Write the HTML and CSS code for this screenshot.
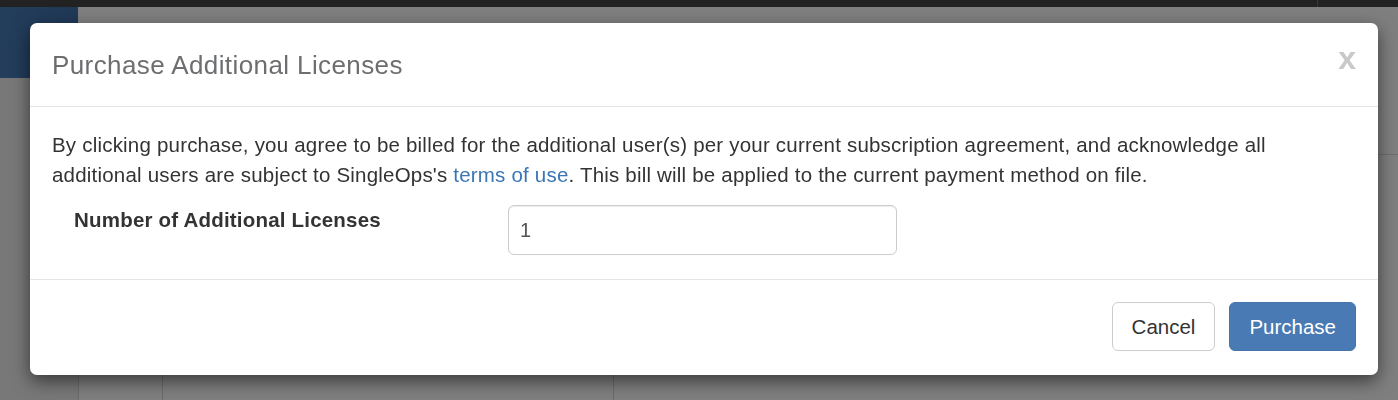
FILE: index.html
```html
<!DOCTYPE html>
<html lang="en">
<head>
  <meta charset="UTF-8">
  <title>Purchase Additional Licenses</title>
  <link rel="stylesheet" href="styles.css">
</head>
<body>

  <!-- page behind the modal -->
  <div class="app">
    <div class="topbar"><span class="topbar-split"></span></div>
    <div class="app-body">
      <div class="sidebar">
        <div class="brand"></div>
      </div>
      <div class="main">
        <div class="main-head"></div>
        <div class="main-grid">
          <div class="col col-narrow"></div>
          <div class="col col-wide"></div>
          <div class="col col-rest"></div>
        </div>
      </div>
    </div>
  </div>

  <div class="backdrop"></div>

  <!-- Modal -->
  <div class="modal">
    <div class="modal-header">
      <button type="button" class="close">x</button>
      <h4 class="modal-title">Purchase Additional Licenses</h4>
    </div>

    <div class="modal-body">
      <p>By clicking purchase, you agree to be billed for the additional user(s) per your current subscription agreement, and acknowledge all additional users are subject to SingleOps's <a href="#">terms of use</a>. This bill will be applied to the current payment method on file.</p>

      <div class="form-row">
        <label for="license-count">Number of Additional Licenses</label>
        <input type="text" id="license-count" class="form-control" value="1">
      </div>
    </div>

    <div class="modal-footer">
      <button type="button" class="btn btn-default">Cancel</button>
      <button type="button" class="btn btn-primary">Purchase</button>
    </div>
  </div>

</body>
</html>
```

FILE: styles.css
```css
* {
  box-sizing: border-box;
}

html,
body {
  height: 100%;
}

body {
  margin: 0;
  font-family: "Liberation Sans", Arial, Helvetica, sans-serif;
  color: #333;
  background-color: #fff;
  overflow: hidden;
}

/* Page behind the modal */
.app {
  height: 100%;
  display: flex;
  flex-direction: column;
}

.topbar {
  height: 7px;
  background-color: #444;
  position: relative;
}

.topbar-split {
  position: absolute;
  left: 1317px;
  top: 0;
  bottom: 0;
  border-left: 1px solid #6e6e6e;
}

.app-body {
  flex: 1;
  display: flex;
}

.sidebar {
  width: 78px;
  background-color: #f0f0f0;
}

.brand {
  height: 71px;
  background: linear-gradient(90deg, #477cb8, #3f72ad);
}

.main {
  flex: 1;
  display: flex;
  flex-direction: column;
  background-color: #fff;
}

.main-head {
  height: 148px;
  border-bottom: 1px solid #dcdcdc;
}

.main-grid {
  flex: 1;
  display: flex;
}

.col {
  border-left: 1px solid #d8d8d8;
}

.col-narrow {
  width: 84px;
}

.col-wide {
  width: 451px;
}

.col-rest {
  flex: 1;
}

.backdrop {
  position: fixed;
  inset: 0;
  background-color: rgba(0, 0, 0, 0.5);
}

/* Modal */
.modal {
  position: absolute;
  left: 30px;
  top: 23px;
  width: 1348px;
  height: 352px;
  background-color: #fff;
  border-radius: 7px;
  box-shadow: 0 6px 18px rgba(0, 0, 0, 0.55);
  display: flex;
  flex-direction: column;
}

.modal-header {
  padding: 27px 22px 26px;
  border-bottom: 1px solid #e5e5e5;
}

.modal-title {
  margin: 0;
  font-size: 26px;
  line-height: 30px;
  letter-spacing: 0.4px;
  font-weight: normal;
  color: #6d6e70;
}

.close {
  float: right;
  margin: -7px 0 0;
  padding: 0;
  border: none;
  background: none;
  font-family: inherit;
  font-size: 32px;
  line-height: 30px;
  font-weight: bold;
  color: #c9c9c9;
  cursor: pointer;
}

.modal-body {
  padding: 23px 22px 23px;
  font-size: 20.5px;
  line-height: 30px;
  letter-spacing: 0.2px;
}

.modal-body p {
  margin: 0 0 15px;
}

.modal-body a {
  color: #3a76b4;
  text-decoration: none;
}

.form-row {
  display: grid;
  grid-template-columns: 434px 389px;
  padding-left: 22px;
}

.form-row label {
  font-weight: bold;
  font-size: 20.5px;
  letter-spacing: 0.2px;
}

.form-control {
  height: 50px;
  padding: 0 11px;
  font-family: inherit;
  font-size: 20px;
  color: #555;
  border: 1px solid #ccc;
  border-radius: 6px;
  box-shadow: inset 0 1px 1px rgba(0, 0, 0, 0.075);
}

.modal-footer {
  margin-top: auto;
  padding: 22px 22px 24px;
  border-top: 1px solid #e5e5e5;
  display: flex;
  justify-content: flex-end;
  gap: 14px;
}

.btn {
  height: 49px;
  padding: 0 19px;
  font-family: inherit;
  font-size: 20.5px;
  border: 1px solid transparent;
  border-radius: 6px;
  cursor: pointer;
}

.btn-default {
  color: #333;
  background-color: #fff;
  border-color: #ccc;
}

.btn-primary {
  color: #fff;
  background-color: #4a7ab3;
  border-color: #4574ad;
}
```
